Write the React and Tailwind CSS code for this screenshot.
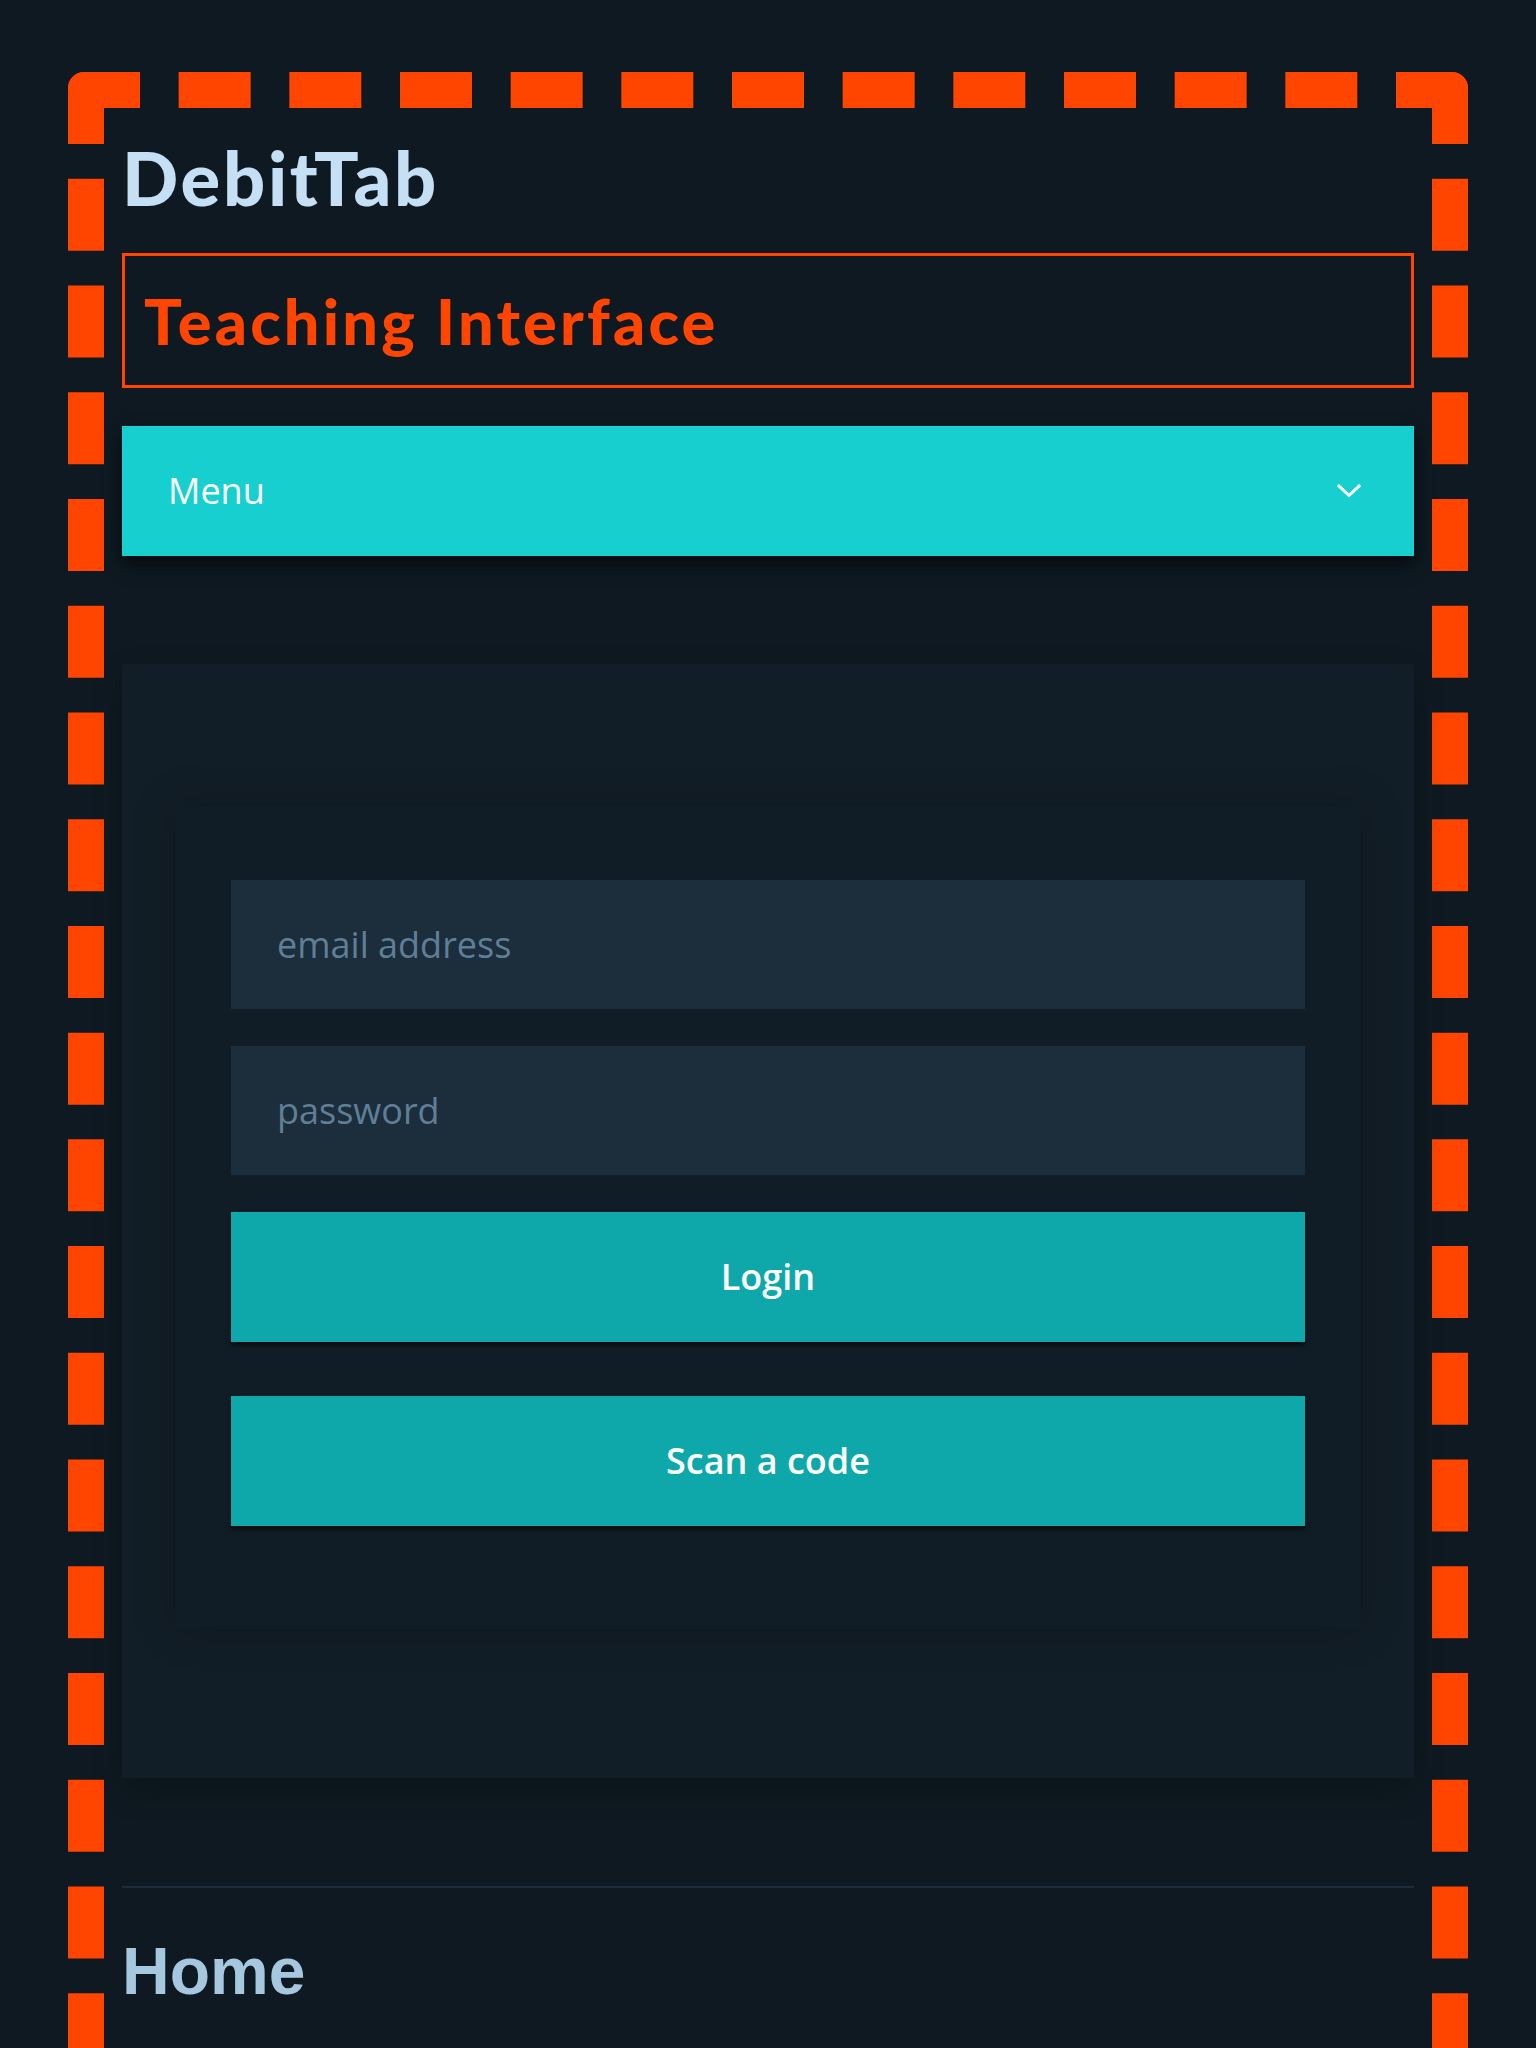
import React from 'react';

const ChevronDown = () => (
    <svg width="24" height="14" viewBox="0 0 24 14" fill="none">
        <polyline points="2,2 12,11.5 22,2" stroke="#ffffff" strokeWidth="3" strokeLinecap="square" />
    </svg>
);

const LoginCard = () => {
    return (
        <div className="bg-[#111d26] px-[55px] pt-[73px] pb-[101px] shadow-[0_0_40px_rgba(0,0,0,0.25)]">
            <div className="flex h-[129px] items-center bg-[#1c2d3c] pl-[46px] text-[36px] text-[#5f7f96]">
                email address
            </div>
            <div className="mt-[37px] flex h-[129px] items-center bg-[#1c2d3c] pl-[46px] text-[36px] text-[#5f7f96]">
                password
            </div>
            <button className="mt-[37px] flex h-[130px] w-full items-center justify-center bg-[#0ea8aa] text-[36px] font-semibold text-white shadow-[0_4px_4px_rgba(0,0,0,0.55)]">
                Login
            </button>
            <button className="mt-[54px] flex h-[130px] w-full items-center justify-center bg-[#0ea8aa] text-[36px] font-semibold text-white shadow-[0_4px_4px_rgba(0,0,0,0.55)]">
                Scan a code
            </button>
        </div>
    );
};

export default function App() {
    return (
        <div className="min-h-screen overflow-hidden bg-[#0e1921] px-[68px] pt-[72px] font-['Open_Sans',sans-serif]">
            <div className="h-[2100px] rounded-[16px] border-[36px] border-dashed border-[#ff4500] px-[18px]">
                {/* site title */}
                <h1 className="pt-[26px] font-['Lato',sans-serif] text-[74px] font-black leading-[88px] tracking-[2.7px] text-[#c5e0f5]">
                    DebitTab
                </h1>

                <div className="mt-[31px] flex h-[135px] items-center border-[3px] border-[#ff4500] pl-[19px]">
                    <h2 className="font-['Lato',sans-serif] text-[63px] font-black leading-none tracking-[3.2px] text-[#ff4500]">
                        Teaching Interface
                    </h2>
                </div>

                <div className="mt-[38px] flex h-[130px] items-center justify-between bg-[#18cfcf] pl-[46px] pr-[53px] shadow-[0_8px_16px_rgba(0,0,0,0.6)]">
                    <span className="text-[36px] text-white">Menu</span>
                    <ChevronDown />
                </div>

                <div className="mt-[108px] bg-[#121e27] px-[54px] pt-[143px] pb-[151px] shadow-[0_12px_30px_rgba(0,0,0,0.2)]">
                    <LoginCard />
                </div>

                <div className="mt-[108px] h-[2px] bg-[#1c2b38]" />

                <h2 className="mt-[44px] font-['Liberation_Sans',Arial,sans-serif] text-[66px] font-bold leading-[1.2] text-[#a6c8de]">
                    Home
                </h2>
            </div>
        </div>
    );
}
